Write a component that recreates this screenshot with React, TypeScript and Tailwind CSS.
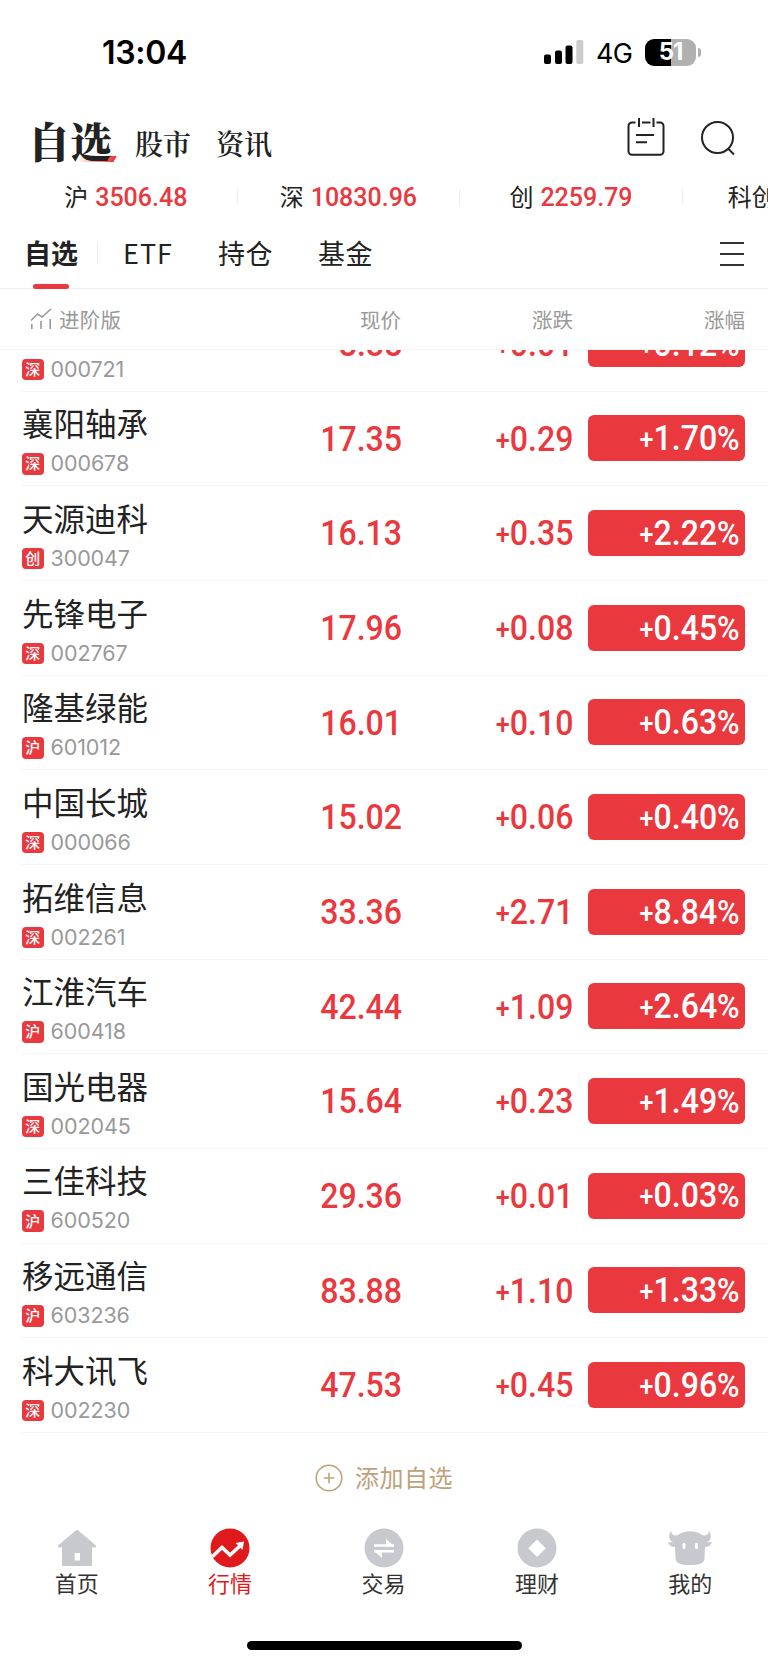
import type { ReactNode } from 'react'

interface Stock {
  name: string
  market: string
  code: string
  price: string
  change: string
  percent: string
}

const STOCKS: Stock[] = [
  { name: '', market: '深', code: '000721', price: '8.38', change: '+0.01', percent: '+0.12%' },
  { name: '襄阳轴承', market: '深', code: '000678', price: '17.35', change: '+0.29', percent: '+1.70%' },
  { name: '天源迪科', market: '创', code: '300047', price: '16.13', change: '+0.35', percent: '+2.22%' },
  { name: '先锋电子', market: '深', code: '002767', price: '17.96', change: '+0.08', percent: '+0.45%' },
  { name: '隆基绿能', market: '沪', code: '601012', price: '16.01', change: '+0.10', percent: '+0.63%' },
  { name: '中国长城', market: '深', code: '000066', price: '15.02', change: '+0.06', percent: '+0.40%' },
  { name: '拓维信息', market: '深', code: '002261', price: '33.36', change: '+2.71', percent: '+8.84%' },
  { name: '江淮汽车', market: '沪', code: '600418', price: '42.44', change: '+1.09', percent: '+2.64%' },
  { name: '国光电器', market: '深', code: '002045', price: '15.64', change: '+0.23', percent: '+1.49%' },
  { name: '三佳科技', market: '沪', code: '600520', price: '29.36', change: '+0.01', percent: '+0.03%' },
  { name: '移远通信', market: '沪', code: '603236', price: '83.88', change: '+1.10', percent: '+1.33%' },
  { name: '科大讯飞', market: '深', code: '002230', price: '47.53', change: '+0.45', percent: '+0.96%' },
]

const INDICES = [
  { label: '沪', value: '3506.48' },
  { label: '深', value: '10830.96' },
  { label: '创', value: '2259.79' },
]

export default function App() {
  return (
    <div className="w-[768px] h-[1665px] bg-white text-[#222] overflow-hidden flex flex-col font-['Noto_Sans_CJK_SC',sans-serif]">
      <StatusBar />
      <Header />
      <IndexTicker />
      <Tabs />
      <TableHead />
      <div className="h-[1084px] shrink-0 overflow-hidden">
        {/* the list is scrolled, so the first row is partly hidden */}
        <div className="-mt-[53px]">
          {STOCKS.map(s => <StockRow key={s.code} stock={s} />)}
        </div>
      </div>
      <div className="h-[88px] shrink-0 flex items-center justify-center gap-3 text-[#bda27b]">
        <svg width="28" height="28" viewBox="0 0 28 28" fill="none" stroke="currentColor">
          <circle cx="14" cy="14" r="12.8" strokeWidth="1.6" />
          <path d="M14 8.8v10.4M8.8 14h10.4" strokeWidth="1.6" />
        </svg>
        <span className="mb-[3px] text-[24px] leading-none tracking-[0.5px]">添加自选</span>
      </div>
      <BottomNav />
    </div>
  )
}

function StatusBar() {
  return (
    <div className="h-[104px] shrink-0 flex items-center justify-between pt-px pl-[102px] pr-[67px] text-black font-['Inter',sans-serif]">
      <span className="pt-px text-[32px] font-semibold leading-none tracking-[-0.3px]">13:04</span>
      <div className="flex items-center">
        <svg className="mb-px" width="40" height="26" viewBox="0 0 40 26">
          <rect x="0" y="15.5" width="7" height="9.5" rx="2" />
          <rect x="11" y="11.5" width="7" height="13.5" rx="2" />
          <rect x="21.5" y="6.5" width="7" height="18.5" rx="2" />
          <rect x="32.3" y="1" width="7" height="24" rx="2" fill="#ccc" />
        </svg>
        <span className="ml-3 pt-[2px] text-[27px] leading-none tracking-[-0.8px]">4G</span>
        <div className="ml-[13px] mb-px w-[51px] h-[27px] rounded-[9px] bg-linear-to-r from-black from-51% to-[#b0b0b0] to-51% flex items-center justify-center text-white text-[24px] font-bold leading-none tracking-[-1px]">
          51
        </div>
        <div className="ml-[2px] mb-px w-[3px] h-[9px] rounded-r-full bg-[#b0b0b0]" />
      </div>
    </div>
  )
}

function Header() {
  return (
    <div className="h-[72px] shrink-0 flex items-center pl-[28px] pr-[32px] font-['Noto_Serif_CJK_SC','Noto_Sans_CJK_SC',serif]">
      <div className="relative text-[42px] font-black leading-none">
        <span className="absolute left-[50px] -bottom-px w-[37px] h-[6px] -skew-x-[30deg] bg-linear-to-r from-white to-[#f0222d]" />
        <span className="relative">自选</span>
      </div>
      <span className="ml-[23px] mt-[5px] text-[28px] font-semibold leading-none">股市</span>
      <span className="ml-[25px] mt-[5px] text-[28px] font-semibold leading-none">资讯</span>
      <svg className="ml-auto mb-[7px]" width="38" height="40" viewBox="0 0 38 40" fill="none" stroke="#222" strokeWidth="2">
        <path d="M8.500 5.500H5a3.500 3.500 0 0 0-3.500 3.500v25.200A3.500 3.500 0 0 0 5 37.700h28a3.500 3.500 0 0 0 3.500-3.500V9A3.500 3.500 0 0 0 33 5.500h-3.500M15 5.500h8.500" />
        <path d="M12 1v9M26.500 1v9M9 18h18M9 25.300h11" />
      </svg>
      <svg className="ml-[35px] mb-[5px]" width="36" height="36" viewBox="0 0 36 36" fill="none" stroke="#222" strokeWidth="2">
        <circle cx="17.500" cy="17.500" r="15.500" />
        <path d="M28 28.500l6 6" />
      </svg>
    </div>
  )
}

function IndexTicker() {
  return (
    <div className="h-[41px] shrink-0 flex items-center pl-[15px] pt-px overflow-hidden">
      {INDICES.map(i => (
        <div key={i.label} className="w-[222.600px] h-4 shrink-0 flex items-center justify-center gap-[7px] border-r border-[#eee]">
          <span className="mb-[2px] text-[24px] leading-none">{i.label}</span>
          <span className="text-[25px] leading-none font-medium text-[#e9393f] font-['Roboto',sans-serif]">{i.value}</span>
        </div>
      ))}
      <span className="ml-[45px] mb-[2px] shrink-0 text-[24px] leading-none">科创</span>
    </div>
  )
}

function Tabs() {
  return (
    <div className="h-[72px] shrink-0 flex items-center border-b border-[#eee] pl-6 pr-6 text-[27px] leading-none">
      <div className="relative h-full flex items-center font-bold">
        自选
        <div className="absolute left-[9px] -bottom-px w-[36px] h-[5px] rounded-full bg-[#e9393f]" />
      </div>
      <div className="ml-[19px] w-px h-[23px] bg-[#eee]" />
      <span className="ml-[25px] tracking-[1px]">ETF</span>
      <span className="ml-[45px] tracking-[0.500px]">持仓</span>
      <span className="ml-[45px] tracking-[0.500px]">基金</span>
      <div className="ml-auto mt-[2px] w-6 flex flex-col gap-[9px]">
        <div className="h-[2px] bg-[#333]" />
        <div className="h-[2px] bg-[#333]" />
        <div className="h-[2px] bg-[#333]" />
      </div>
    </div>
  )
}

function TableHead() {
  return (
    <div className="h-[61px] shrink-0 grid grid-cols-[379px_172px_172px] items-center pl-[22px] border-b border-[#f5f5f5] text-[20.500px] leading-none text-[#999]">
      <div className="flex items-center justify-between">
        <div className="flex items-center gap-[7px] pl-2">
          <svg width="22" height="22" viewBox="0 0 22 22" fill="none" stroke="currentColor" strokeWidth="1.600">
            <path d="M1 12.500l6.500-6.500 4.500 3 9-8M1.800 16v5M11 13v8M20.200 11v10" />
          </svg>
          <span className="tracking-[0.300px]">进阶版</span>
        </div>
        <span>现价</span>
      </div>
      <span className="text-right">涨跌</span>
      <span className="text-right">涨幅</span>
    </div>
  )
}

// signs and percent marks are drawn smaller than the digits
function Figure({ value }: { value: string }) {
  return (
    <span className="inline-block origin-right scale-x-93">
      {value.split(/([+%])/).map((part, i) => (
        <span
          key={i}
          className={part === '+' ? 'relative -top-px text-[27px]' : part === '%' ? 'text-[33px]' : ''}
        >
          {part}
        </span>
      ))}
    </span>
  )
}

function StockRow({ stock }: { stock: Stock }) {
  return (
    <div className="ml-[22px] h-[94.670px] flex items-center border-b border-[#f5f5f5] text-[34.500px] font-medium leading-none text-[#e9393f] font-['Roboto',sans-serif]">
      <div className="w-[180px] font-normal">
        <div className="h-10 text-[31.500px] leading-[40px] text-[#222] font-['Noto_Sans_CJK_SC',sans-serif]">{stock.name}</div>
        <div className="mt-[11px] flex items-center gap-[7px]">
          <span className="size-[21.500px] rounded-[4px] bg-[#e9393f] pb-[2px] text-white text-[15px] font-medium flex items-center justify-center font-['Noto_Sans_CJK_SC',sans-serif]">
            {stock.market}
          </span>
          <span className="text-[21.500px] tracking-[-0.100px] text-[#999] font-['Inter',sans-serif]">{stock.code}</span>
        </div>
      </div>
      <span className="w-[200px] pt-px text-right"><Figure value={stock.price} /></span>
      <span className="w-[171px] pt-px text-right"><Figure value={stock.change} /></span>
      <span className="ml-[15px] w-[157px] h-[46px] rounded-[6px] bg-[#e9393f] pr-[5px] text-white flex items-center justify-end">
        <Figure value={stock.percent} />
      </span>
    </div>
  )
}

function NavItem({ label, active, children }: { label: string; active?: boolean; children: ReactNode }) {
  return (
    <div className={`flex-1 flex flex-col items-center ${active ? 'text-[#e0191d]' : 'text-[#333]'}`}>
      <svg width="44" height="40" viewBox="0 0 44 40" fill="#c8c9ce">{children}</svg>
      <span className="mt-[3px] text-[22px] leading-none">{label}</span>
    </div>
  )
}

function BottomNav() {
  return (
    <div className="flex-1 flex flex-col items-center justify-between pt-[6px] pb-[15px]">
      <div className="w-full flex pr-px">
        <NavItem label="首页">
          <path d="M22 1.500L3 17.500q-.5 2 1.500 2h2.500V38h30V19.500h2.500q2 0 1.500-2zM19.700 25h5.300v7.500h-5.300z" fillRule="evenodd" />
        </NavItem>
        <NavItem label="行情" active>
          <circle cx="22" cy="20" r="19.500" fill="#e0191d" />
          <path d="M4.500 28.500L14 19.500l8 7.500L33 17" fill="none" stroke="#fff" strokeWidth="3.500" />
          <path d="M27.500 15l8.500-1.500-1.500 8.500z" fill="#fff" />
        </NavItem>
        <NavItem label="交易">
          <circle cx="22" cy="20" r="19.500" />
          <path d="M12 17.500h20M12 23.300h20" stroke="#fff" strokeWidth="2.500" />
          <path d="M24 11l8.500 7.500H24zM20 30l-8.500-7.500H20z" fill="#fff" />
        </NavItem>
        <NavItem label="理财">
          <circle cx="22" cy="20" r="19.500" />
          <path d="M22 11.500l8.700 8.700-8.700 8.700-8.700-8.700z" fill="#fff" />
        </NavItem>
        <NavItem label="我的">
          <path d="M3 3C0 7.500 1 12.500 5 14.500q-5.500-1.500-4.500 1 2 3.500 6.500 3.500l.5 11q-.5 7 14.500 7t14.500-7l.5-11q4.500 0 6.500-3.500 1-2.500-4.500-1c4-2 5-7 2-11.500-.8 4-3.500 5.500-7 4-6-5-17-5-24 0C6.500 8.500 3.800 7 3 3z" />
          <ellipse cx="16" cy="18" rx="1.600" ry="3.200" fill="#fff" />
          <ellipse cx="28.500" cy="18" rx="1.600" ry="3.200" fill="#fff" />
        </NavItem>
      </div>
      <div className="w-[275px] h-[9px] rounded-full bg-black" />
    </div>
  )
}
